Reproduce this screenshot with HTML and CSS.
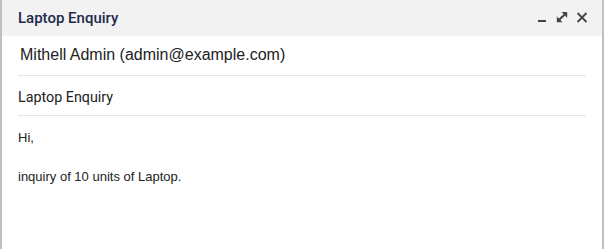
FILE: index.html
```html
<!DOCTYPE html>
<html>
<head>
<meta charset="utf-8">
<link rel="stylesheet" href="styles.css">
</head>
<body>
<div class="dialog">
  <div class="header">
    <div class="title">Laptop Enquiry</div>
    <div class="actions">
      <svg class="icon" viewBox="0 0 12 12" width="12" height="12"><rect x="2" y="8" width="8" height="2" fill="#444"/></svg>
      <svg class="icon" viewBox="0 0 12 12" width="12" height="12">
        <polygon points="5.5,0 11.2,0 11.2,5.7" fill="#444"/>
        <line x1="10" y1="1.2" x2="5.8" y2="5.4" stroke="#444" stroke-width="2"/>
        <polygon points="0.8,4.5 0.8,10.2 6.5,10.2" fill="#444"/>
        <line x1="2" y1="9" x2="6.2" y2="4.8" stroke="#444" stroke-width="2"/>
      </svg>
      <svg class="icon" viewBox="0 0 12 12" width="12" height="12">
        <path d="M1.5 1 L10.5 10 M10.5 1 L1.5 10" stroke="#444" stroke-width="1.8" fill="none"/>
      </svg>
    </div>
  </div>
  <div class="content">
    <div class="recipient">Mithell Admin (admin@example.com)</div>
    <div class="subject">Laptop Enquiry</div>
    <div class="message">
      <p>Hi,</p>
      <p><br></p>
      <p>inquiry of 10 units of Laptop.</p>
    </div>
  </div>
</div>
</body>
</html>
```
FILE: styles.css
```css
html, body {
  margin: 0;
  padding: 0;
}
body {
  background: #c9bdbb;
  width: 604px;
  height: 249px;
  overflow: hidden;
}
.dialog {
  margin-left: 2px;
  width: 600px;
  height: 249px;
  background: #ffffff;
}
.header {
  height: 36px;
  background: #f2f2f2;
  display: flex;
  align-items: center;
  justify-content: space-between;
  padding: 0 14px 0 16px;
  box-sizing: border-box;
}
.title {
  font-family: Roboto, "Noto Sans", sans-serif;
  font-weight: 500;
  font-size: 15px;
  color: #1f2b4a;
}
.actions {
  display: flex;
  gap: 8px;
  align-items: center;
}
.icon {
  display: block;
}
.content {
  padding: 0 16px;
}
.recipient {
  font-family: "Liberation Sans", Arial, sans-serif;
  font-size: 16px;
  line-height: 18px;
  color: #222;
  padding: 10px 0 11px 2px;
  border-bottom: 1px solid #e6e6e6;
}
.subject {
  font-family: Roboto, "Noto Sans", sans-serif;
  font-size: 14.3px;
  line-height: 16px;
  color: #222;
  padding: 13px 0 10px 0;
  border-bottom: 1px solid #e6e6e6;
}
.message {
  font-family: "Liberation Sans", Arial, sans-serif;
  font-size: 13px;
  line-height: 19.5px;
  color: #222;
  padding-top: 12px;
}
.message p {
  margin: 0;
}
```
